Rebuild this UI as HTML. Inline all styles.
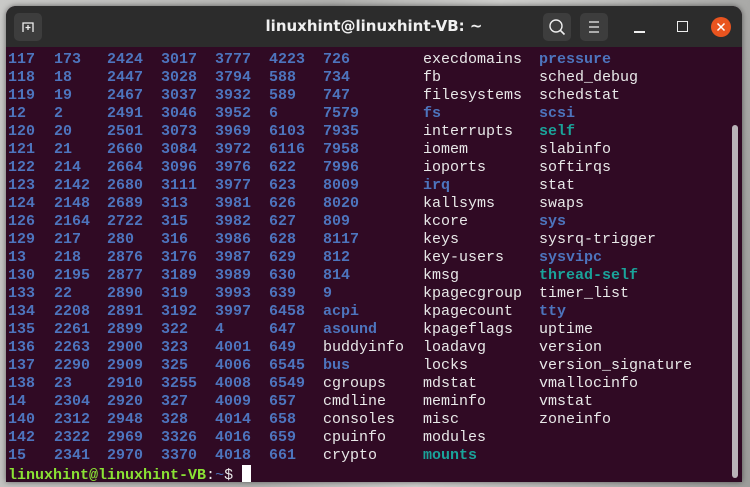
<!DOCTYPE html>
<html><head><meta charset="utf-8"><style>
html,body{margin:0;padding:0;width:750px;height:487px;overflow:hidden;background:#a9a9a7;}
body{background:linear-gradient(100deg,#c9c9c7 0%,#b0b0ae 40%,#cfcfcd 60%,#9c9c9a 100%);}
.win{position:absolute;left:6px;top:6px;width:736px;height:476px;background:#300a24;border-radius:10px 10px 0 0;overflow:hidden;box-shadow:0 0 6px rgba(0,0,0,.5);}
.tb{position:absolute;left:0;top:0;width:736px;height:41px;background:#2c2c2c;}
.title{position:absolute;left:0;width:736px;top:11px;text-align:center;color:#f0f0f0;font:bold 15px "DejaVu Sans","Liberation Sans",sans-serif;}
.btn{position:absolute;top:7px;width:28px;height:28px;background:#3d3d3d;border-radius:5px;}
.t{position:absolute;font:15px/18px "Liberation Mono","DejaVu Sans Mono",monospace;color:#e8e8e8;white-space:pre;}
.b{color:#4d74bd;font-weight:bold}
.c{color:#1aa39a;font-weight:bold}
.g{color:#8ae234;font-weight:bold}
.sb{position:absolute;left:726px;top:119px;width:6px;height:353px;background:#b9b3b8;border-radius:3px;}
</style></head><body>
<div class="win">
<div class="tb">
<div class="btn" style="left:8px"><svg width="28" height="28"><path d="M9 19V10h10v9" fill="none" stroke="#eee" stroke-width="1.3"/><path d="M14 12v5M11.5 14.5h5" stroke="#eee" stroke-width="1.3"/></svg></div>
<div class="title">linuxhint@linuxhint-VB: ~</div>
<div class="btn" style="left:537px"><svg width="28" height="28"><circle cx="13" cy="13" r="6" fill="none" stroke="#eee" stroke-width="1.4"/><path d="M17.5 17.5l4 4" stroke="#eee" stroke-width="1.6"/></svg></div>
<div class="btn" style="left:574px"><svg width="28" height="28"><path d="M9 9h10M9 14h10M9 19h10" stroke="#eee" stroke-width="1.3"/></svg></div>
<div style="position:absolute;left:628px;top:25px;width:11px;height:2px;background:#eee"></div>
<div style="position:absolute;left:671px;top:15px;width:9px;height:9px;border:1.5px solid #eee"></div>
<div style="position:absolute;left:705px;top:11px;width:20px;height:20px;border-radius:50%;background:#e9541f"><svg width="20" height="20"><path d="M6.5 6.5l7 7M13.5 6.5l-7 7" stroke="#fff" stroke-width="1.5"/></svg></div>
</div>
<div class="sb"></div>
<div class="t b" style="left:2px;top:45px">117
118
119
12
120
121
122
123
124
126
129
13
130
133
134
135
136
137
138
14
140
142
15</div>
<div class="t b" style="left:48px;top:45px">173
18
19
2
20
21
214
2142
2148
2164
217
218
2195
22
2208
2261
2263
2290
23
2304
2312
2322
2341</div>
<div class="t b" style="left:101px;top:45px">2424
2447
2467
2491
2501
2660
2664
2680
2689
2722
280
2876
2877
2890
2891
2899
2900
2909
2910
2920
2948
2969
2970</div>
<div class="t b" style="left:155px;top:45px">3017
3028
3037
3046
3073
3084
3096
3111
313
315
316
3176
3189
319
3192
322
323
325
3255
327
328
3326
3370</div>
<div class="t b" style="left:209px;top:45px">3777
3794
3932
3952
3969
3972
3976
3977
3981
3982
3986
3987
3989
3993
3997
4
4001
4006
4008
4009
4014
4016
4018</div>
<div class="t b" style="left:263px;top:45px">4223
588
589
6
6103
6116
622
623
626
627
628
629
630
639
6458
647
649
6545
6549
657
658
659
661</div>
<div class="t" style="left:317px;top:45px"><span class="b">726
734
747
7579
7935
7958
7996
8009
8020
809
8117
812
814
9
acpi
asound</span>
buddyinfo
<span class="b">bus</span>
cgroups
cmdline
consoles
cpuinfo
crypto</div>
<div class="t" style="left:417px;top:45px">execdomains
fb
filesystems
<span class="b">fs</span>
interrupts
iomem
ioports
<span class="b">irq</span>
kallsyms
kcore
keys
key-users
kmsg
kpagecgroup
kpagecount
kpageflags
loadavg
locks
mdstat
meminfo
misc
modules
<span class="c">mounts</span></div>
<div class="t" style="left:533px;top:45px"><span class="b">pressure</span>
sched_debug
schedstat
<span class="b">scsi</span>
<span class="c">self</span>
slabinfo
softirqs
stat
swaps
<span class="b">sys</span>
sysrq-trigger
<span class="b">sysvipc</span>
<span class="c">thread-self</span>
timer_list
<span class="b">tty</span>
uptime
version
version_signature
vmallocinfo
vmstat
zoneinfo</div>
<div class="t" style="left:2px;top:459px"><span class="g">linuxhint@linuxhint-VB</span>:<span class="b" style="font-weight:normal">~</span>$ <span style="display:inline-block;width:9px;height:17px;background:#fff;vertical-align:-3px"></span></div>
</div>
</body></html>
